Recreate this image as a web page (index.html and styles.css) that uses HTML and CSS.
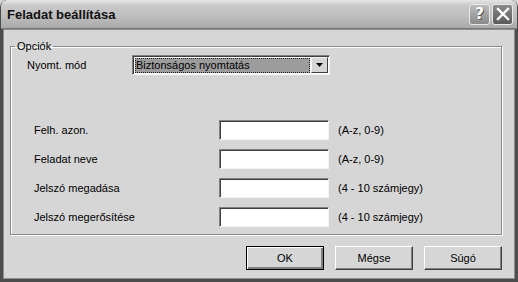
FILE: index.html
```html
<!DOCTYPE html>
<html lang="hu">
<head>
  <meta charset="UTF-8">
  <title>Feladat beállítása</title>
  <link rel="stylesheet" href="styles.css">
</head>
<body>
  <div class="window">
    <div class="titlebar">
      <span class="title">Feladat beállítása</span>
      <div class="caption-buttons">
        <button class="cap-btn">?</button>
        <button class="cap-btn close">
          <svg width="14" height="14" viewBox="0 0 14 14"><path d="M2 2 L12 12 M12 2 L2 12" stroke="#fff" stroke-width="2.4" stroke-linecap="square"/></svg>
        </button>
      </div>
    </div>

    <div class="client">
      <fieldset class="group">
        <legend>Opciók</legend>
        <div class="mode-row">
          <label>Nyomt. mód</label>
          <div class="combo">
            <span class="combo-value"><span class="sel">Biztonságos nyomtatás</span></span>
            <span class="combo-arrow">
              <svg width="8" height="5" viewBox="0 0 8 5"><path d="M0 0 H7 L3.5 4 Z" fill="#000"/></svg>
            </span>
          </div>
        </div>

        <div class="fields">
          <label>Felh. azon.</label>
          <span class="input"></span>
          <span class="hint">(A-z, 0-9)</span>

          <label>Feladat neve</label>
          <span class="input"></span>
          <span class="hint">(A-z, 0-9)</span>

          <label>Jelszó megadása</label>
          <span class="input"></span>
          <span class="hint">(4 - 10 számjegy)</span>

          <label>Jelszó megerősítése</label>
          <span class="input"></span>
          <span class="hint">(4 - 10 számjegy)</span>
        </div>
      </fieldset>

      <div class="buttons">
        <button class="btn default">OK</button>
        <button class="btn">Mégse</button>
        <button class="btn">Súgó</button>
      </div>
    </div>
  </div>
</body>
</html>
```

FILE: styles.css
```css
body {
  margin: 0;
  background: #d6d6d6;
  font-family: "Liberation Sans", Arial, sans-serif;
  font-size: 11px;
  color: #000;
}
.window {
  width: 518px;
  height: 282px;
  box-sizing: border-box;
  display: flex;
  flex-direction: column;
  background: #4c4c4c;
  border-radius: 7px 7px 0 0;
  padding: 0 1px 1px 1px;
}
.titlebar {
  height: 28px;
  display: flex;
  align-items: center;
  justify-content: space-between;
  padding: 0 4px 0 6px;
  border-radius: 6px 6px 0 0;
  background: linear-gradient(to bottom, #e6e6e6 0%, #c9c9c9 20%, #bdbdbd 60%, #a9a9a9 100%);
  border-bottom: 1px solid #777;
}
.title {
  font-family: "Liberation Sans", Arial, sans-serif;
  font-weight: bold;
  font-size: 13px;
  color: #111;
  margin-top: 1px;
}
.caption-buttons {
  display: flex;
  gap: 2px;
}
.cap-btn {
  width: 21px;
  height: 21px;
  padding: 0;
  border: 1px solid #e8e8e8;
  border-radius: 3px;
  background: linear-gradient(to bottom, #bdbdbd, #8a8a8a);
  font-family: "DejaVu Sans", sans-serif;
  font-weight: bold;
  font-size: 15px;
  color: #fff;
  text-shadow: 1px 1px 0 #555;
  display: flex;
  align-items: center;
  justify-content: center;
}
.cap-btn.close {
  background: linear-gradient(to bottom, #8a8a8a, #5a5a5a);
}
.client {
  flex: 1;
  background: #d6d6d6;
  margin: 0 2px 2px 2px;
  border: 1px solid #8e8e8e;
  padding: 8px 12px 0 6px;
  display: flex;
  flex-direction: column;
}
.group {
  margin: 0;
  padding: 0;
  height: 195px;
  box-sizing: border-box;
  border: 1px solid #8a8a8a;
  box-shadow: inset 1px 1px 0 #fff, 1px 1px 0 #fff;
  margin-top: 2px;
}
.group legend {
  margin-left: 4px;
  padding: 0 2px;
  line-height: 12px;
}
.mode-row {
  display: flex;
  align-items: center;
  padding: 3px 0 0 16px;
}
.mode-row label {
  width: 105px;
}
.combo {
  width: 198px;
  height: 20px;
  box-sizing: border-box;
  display: flex;
  background: #fff;
  border-top: 1px solid #808080;
  border-left: 1px solid #808080;
  border-right: 1px solid #f4f4f4;
  border-bottom: 1px solid #f4f4f4;
  box-shadow: inset 1px 1px 0 #404040;
}
.combo-value {
  flex: 1;
  padding: 2px 1px 1px 2px;
  display: flex;
}
.sel {
  flex: 1;
  background: #9c9c9c;
  outline: 1px dotted #222;
  outline-offset: -1px;
  padding-left: 1px;
  line-height: 14px;
}
.combo-arrow {
  width: 15px;
  margin: 1px 1px 1px 0;
  background: #d6d6d6;
  border-top: 1px solid #f4f4f4;
  border-left: 1px solid #f4f4f4;
  border-right: 1px solid #404040;
  border-bottom: 1px solid #404040;
  display: flex;
  align-items: center;
  justify-content: center;
}
.fields {
  display: grid;
  grid-template-columns: 185px 110px auto;
  row-gap: 9px;
  align-items: center;
  padding: 45px 0 0 23px;
}
.input {
  height: 20px;
  box-sizing: border-box;
  background: #fff;
  border-top: 1px solid #808080;
  border-left: 1px solid #808080;
  border-right: 1px solid #f4f4f4;
  border-bottom: 1px solid #f4f4f4;
  box-shadow: inset 1px 1px 0 #404040;
}
.hint {
  padding-left: 9px;
}
.buttons {
  display: flex;
  justify-content: flex-end;
  gap: 11px;
  margin-top: 11px;
}
.btn {
  width: 78px;
  height: 24px;
  box-sizing: border-box;
  font-family: "Liberation Sans", Arial, sans-serif;
  font-size: 11px;
  background: #d6d6d6;
  border-top: 1px solid #fff;
  border-left: 1px solid #fff;
  border-right: 1px solid #404040;
  border-bottom: 1px solid #404040;
  box-shadow: inset -1px -1px 0 #808080;
  padding: 0;
}
.btn.default {
  border: 1px solid #000;
  box-shadow: inset 1px 1px 0 #fff, inset -2px -2px 0 #808080, inset -1px -1px 0 #404040;
}
```
